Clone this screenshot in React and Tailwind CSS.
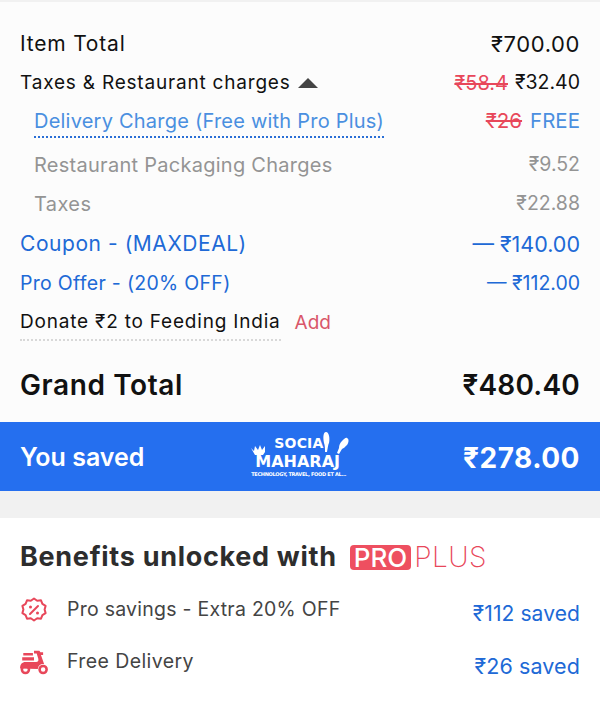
const font = { fontFamily: "Inter, 'Noto Sans', sans-serif" };

function Row({ className, children, right }) {
  return (
    <div className={"flex items-center justify-between " + className}>
      {children}
      {right}
    </div>
  );
}

function Badge() {
  return (
    <svg width="26" height="26" viewBox="0 0 26 26" fill="none" stroke="#e8475a" strokeWidth="2">
      <path d="M13 1.500l3.200 2.200 3.800-.4 1.400 3.600 3.200 2-1 3.600 1 3.600-3.200 2-1.400 3.600-3.800-.4-3.200 2.200-3.200-2.200-3.800.4-1.400-3.600-3.200-2 1-3.600-1-3.600 3.200-2 1.400-3.600 3.800.4z" strokeLinejoin="round" />
      <path d="M9 17l8-8" strokeLinecap="round" />
      <circle cx="9.500" cy="10" r="1.500" fill="#e8475a" stroke="none" />
      <circle cx="16.500" cy="16" r="1.500" fill="#e8475a" stroke="none" />
    </svg>
  );
}

function Scooter() {
  return (
    <svg className="shrink-0" width="30" height="26" viewBox="0 0 28 24" fill="#e8475a">
      <path d="M4 3.500h9v2.500H4zM3 7.500h11v3H3z" />
      <path d="M1 18c0-4 2-6 5-6h10c1.500 0 2.500-1 2-3l-1.500-5H14V1.500h5l1 1.500h2.500v2.500h-2l3 8.500c-3-.5-5.500 1-6 4.500z" />
      <circle cx="6" cy="19" r="3.300" fill="none" stroke="#e8475a" strokeWidth="2.400" />
      <circle cx="22.500" cy="19" r="3.300" fill="none" stroke="#e8475a" strokeWidth="2.400" />
    </svg>
  );
}

function Logo() {
  return (
    <div className="relative h-[50px] w-[100px] text-white" style={{ fontFamily: "'DejaVu Sans', sans-serif" }}>
      <svg className="absolute left-0 top-0" width="100" height="50" viewBox="0 0 100 50" fill="white">
        <path d="M1 16l3 3 1-5 3 4 2-5 2 5 3-4 0 6-2 3H5z" />
        <path d="M76 0c3 0 4 6 3 11-1 2-1 4-2 9h-2c0-4 0-6-1-9-1-5-1-11 2-11z" />
        <path d="M97 6c2 1 2 4 0 7-2 2-3 3-5 4l-3 5-2-1 2-5c0-3 1-5 3-7 2-2 4-4 5-3z" />
      </svg>
      <span className="absolute left-[24px] top-[4px] text-[14px] font-bold leading-none tracking-[0.2px]">SOCIA</span>
      <span className="absolute left-[5px] top-[22px] text-[16px] font-bold leading-none">MAHARAJ</span>
      <span className="absolute left-[1px] top-[40px] text-[5px] font-bold leading-none whitespace-nowrap tracking-[-0.3px]">TECHNOLOGY, TRAVEL, FOOD ET AL...</span>
    </div>
  );
}

export default function App() {
  return (
    <div className="flex h-[704px] w-[600px] flex-col overflow-hidden bg-white" style={font}>
      <div className="h-[2px] bg-[#f1f1f1]" />
      <div className="flex h-[420px] flex-col bg-[#fcfcfc] px-5 pt-[27px]">
        <Row className="h-[30px] text-[21px] tracking-[0.8px] text-[#111]" right={<span className="text-[22px] tracking-[0.6px]">₹700.00</span>}>
          <span>Item Total</span>
        </Row>
        <Row
          className="mt-[9px] h-[30px] text-[19px] tracking-[0.8px] text-[#111]"
          right={
            <span className="flex items-center gap-[7px] tracking-normal">
              <s className="text-[20px] text-[#e8475a]">₹58.4</s>
              <span className="text-[19.500px]">₹32.40</span>
            </span>
          }
        >
          <span className="flex items-center gap-[7px]">
            Taxes &amp; Restaurant charges
            <span className="h-0 w-0 border-x-[10px] border-b-[10px] border-x-transparent border-b-[#444]" />
          </span>
        </Row>
        <Row
          className="mt-[8px] h-[30px] pl-[14px] text-[20px] tracking-[0.22px] text-[#4a8fe0]"
          right={
            <span className="flex gap-2 text-[20.500px] tracking-normal">
              <s className="text-[#e8475a]">₹26</s>
              <span>FREE</span>
            </span>
          }
        >
          <span className="-mb-[2px] border-b-2 border-dotted border-[#2a6fd6]">Delivery Charge (Free with Pro Plus)</span>
        </Row>
        <Row className="mt-[14px] h-[30px] pl-[14px] text-[20px] tracking-[0.27px] text-[#949494]" right={<span className="text-[19.500px] tracking-normal">₹9.52</span>}>
          <span>Restaurant Packaging Charges</span>
        </Row>
        <Row className="mt-[9px] h-[30px] pl-[14px] text-[20px] tracking-[0.4px] text-[#949494]" right={<span className="text-[19.500px] tracking-normal">₹22.88</span>}>
          <span>Taxes</span>
        </Row>
        <Row className="mt-[10px] h-[30px] text-[21px] tracking-[0.55px] text-[#2069d6]" right={<span className="text-[21.500px] tracking-normal">— ₹140.00</span>}>
          <span>Coupon - (MAXDEAL)</span>
        </Row>
        <Row className="mt-[10px] h-[30px] text-[19.500px] tracking-[0.3px] text-[#2069d6]" right={<span className="tracking-normal">— ₹112.00</span>}>
          <span>Pro Offer - (20% OFF)</span>
        </Row>
        <div className="mt-[9px] flex h-[30px] items-center gap-[14px] text-[19px] tracking-[0.8px]">
          <span className="mt-[3px] border-b-2 border-dotted border-[#d8d8d8] pb-[2px] text-[#111]">Donate ₹2 to Feeding India</span>
          <span className="text-[#d9576a] tracking-normal">Add</span>
        </div>
        <Row className="mt-[29px] h-[36px] text-[28px] font-semibold tracking-[0.6px] text-[#111]" right={<span className="tracking-[0.2px]">₹480.40</span>}>
          <span>Grand Total</span>
        </Row>
      </div>
      <div className="flex h-[69px] items-center justify-between bg-[#256fef] px-5 pb-0 font-semibold text-white">
        <span className="mt-[2px] text-[25px]">You saved</span>
        <div className="-ml-[7px]">
          <Logo />
        </div>
        <span className="mt-[2px] text-[28px] font-bold tracking-[0.5px]">₹278.00</span>
      </div>
      <div className="h-[27px] bg-[#f1f1f1]" />
      <div className="flex flex-1 flex-col bg-white px-5 pt-[22px]">
        <div className="flex h-[34px] items-center gap-[13px]">
          <span className="text-[27px] font-bold tracking-[0.7px] text-[#2d2d2d]">Benefits unlocked with</span>
          <span className="flex items-center">
            <span className="rounded-[4px] bg-[#ee4f60] px-[4px] text-[26px] leading-[25px] font-medium text-white">PRO</span>
            <span className="ml-[3px] text-[28px] leading-[25px] font-extralight tracking-[0.5px] text-[#e8475a]">PLUS</span>
          </span>
        </div>
        <div className="mt-[20px] flex h-[32px] items-center justify-between">
          <div className="flex items-center gap-[20px] text-[19.500px] tracking-[0.25px] text-[#444]">
            <span className="flex w-[27px] justify-center"><Badge /></span>
            <span>Pro savings - Extra 20% OFF</span>
          </div>
          <span className="mt-2 text-[21px] tracking-[0.1px] text-[#2069d6]">₹112 saved</span>
        </div>
        <div className="mt-[20px] flex h-[32px] items-center justify-between">
          <div className="flex items-center gap-[20px] text-[19.500px] tracking-[0.4px] text-[#444]">
            <span className="flex w-[27px] justify-center"><Scooter /></span>
            <span>Free Delivery</span>
          </div>
          <span className="mt-2 text-[21.500px] tracking-[0.1px] text-[#2069d6]">₹26 saved</span>
        </div>
      </div>
    </div>
  );
}
